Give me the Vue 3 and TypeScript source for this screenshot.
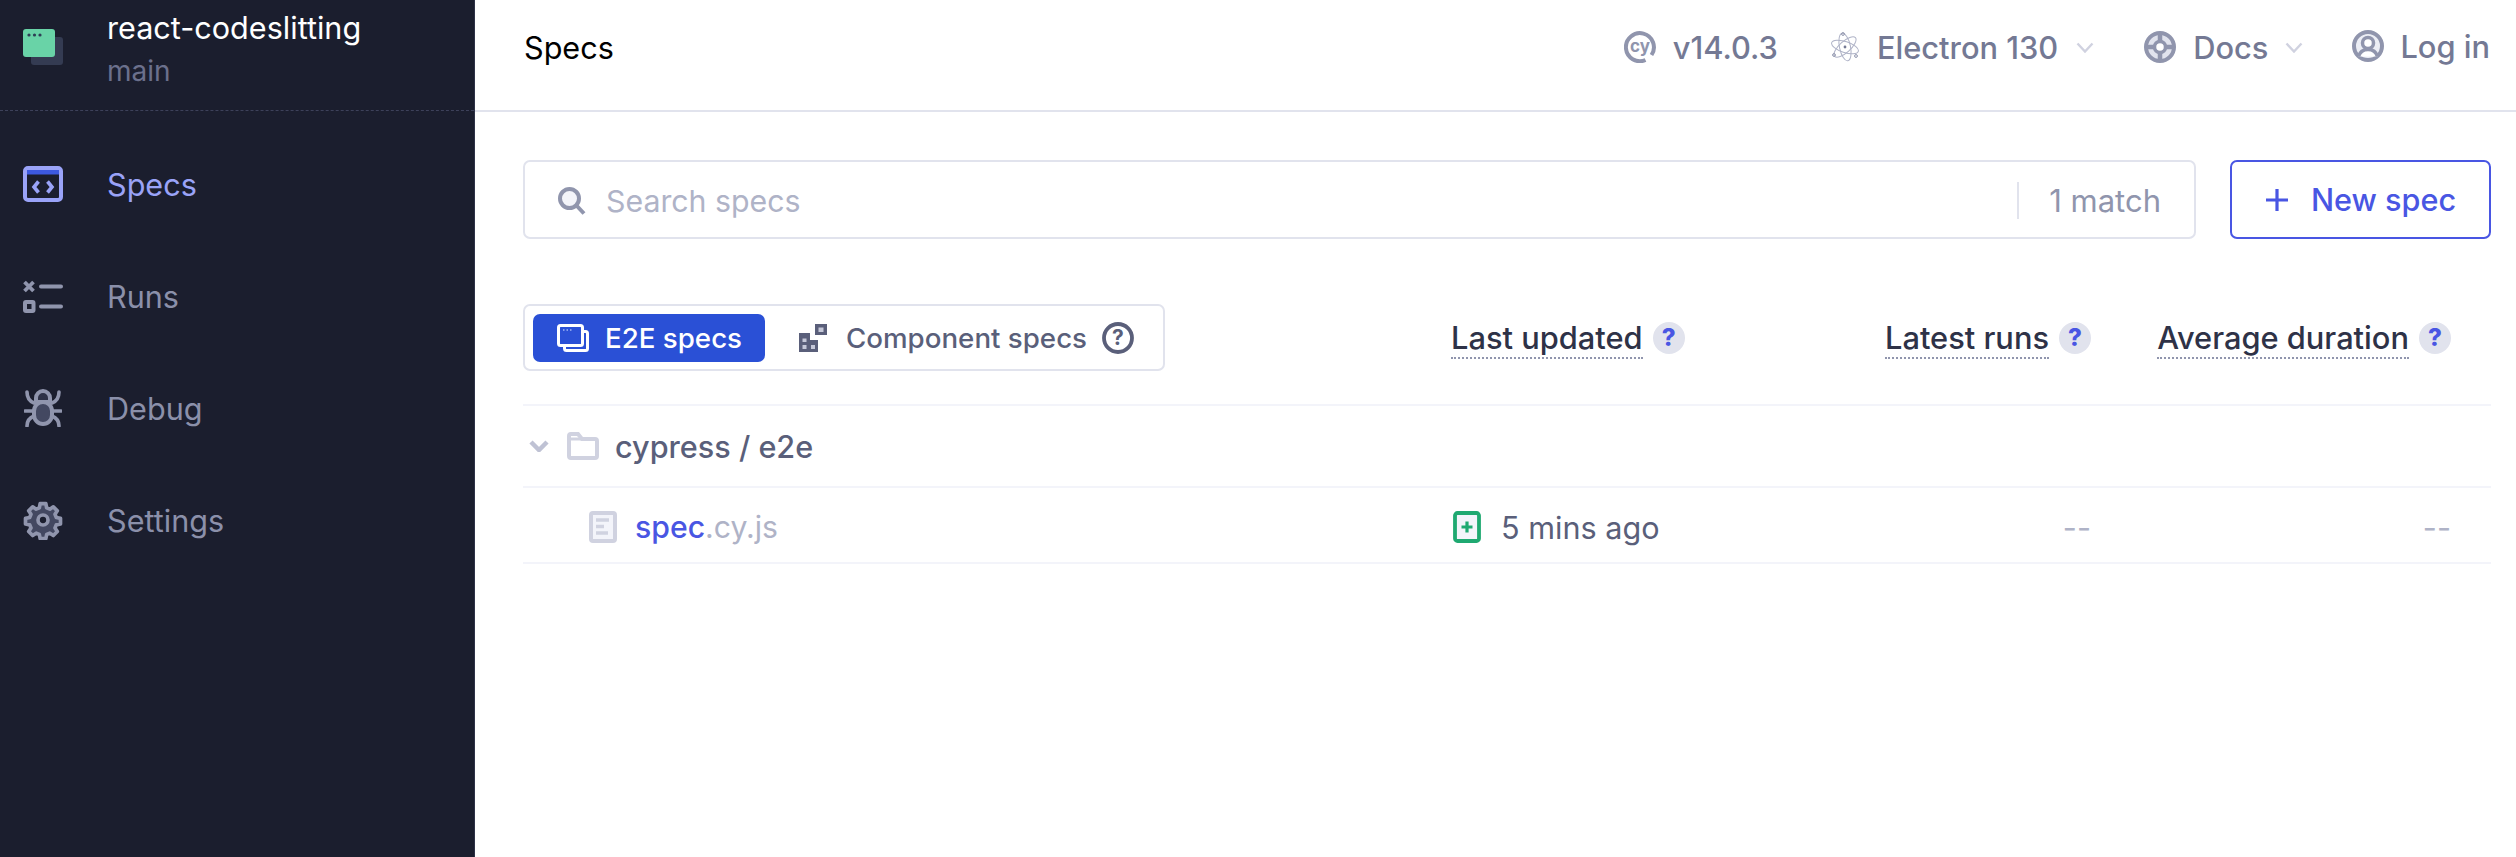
<script setup lang="ts">
const navItems = ['Specs', 'Runs', 'Debug', 'Settings']
</script>

<template>
  <div class="app">
    <aside class="sidebar">
      <div class="brand">
        <svg class="logo" width="40" height="36" viewBox="0 0 40 36">
          <rect x="8" y="8" width="32" height="28" rx="3" fill="#343b52" />
          <rect x="0" y="0" width="32" height="28" rx="3" fill="#69d3a7" />
          <circle cx="6" cy="6" r="1.6" fill="#2e3f55" />
          <circle cx="11.5" cy="6" r="1.6" fill="#2e3f55" />
          <circle cx="17" cy="6" r="1.6" fill="#2e3f55" />
        </svg>
        <div class="brand-text">
          <div class="brand-name">react-codeslitting</div>
          <div class="brand-branch">main</div>
        </div>
      </div>
      <nav class="nav">
        <div v-for="item in navItems" :key="item" class="nav-item" :class="{ active: item === 'Specs' }">
          <span class="nav-icon">
            <svg v-if="item === 'Specs'" width="40" height="36" viewBox="0 0 40 36" fill="none">
              <rect x="2" y="2" width="36" height="32" rx="3" stroke="#9aa3f8" stroke-width="4" />
              <rect x="4" y="4" width="32" height="4.500" fill="#3d59e0" />
              <path d="M15.500 15.500 11 21l4.500 5.500M24.500 15.500 29 21l-4.500 5.500" stroke="#9aa3f8" stroke-width="3.600" />
            </svg>
            <svg v-else-if="item === 'Runs'" width="40" height="33" viewBox="0 0 40 33" fill="none">
              <path d="M1.500 2 10.500 11M10.500 2 1.500 11" stroke="#9095ad" stroke-width="3.800" />
              <path d="M18 6.500h20M18 26.500h20" stroke="#9095ad" stroke-width="4" stroke-linecap="round" />
              <rect x="2" y="22" width="8.500" height="9" rx="1" stroke="#9095ad" stroke-width="4" />
            </svg>
            <svg v-else-if="item === 'Debug'" width="38" height="38" viewBox="0 0 38 38" fill="none">
              <path d="M12 13V9a7 7 0 0 1 14 0v4" stroke="#9095ad" stroke-width="4" fill="#2e3247" />
              <rect x="10" y="13" width="18" height="22" rx="9" fill="#434861" stroke="#9095ad" stroke-width="4" />
              <path d="M10 13h18" stroke="#9095ad" stroke-width="4" />
              <path d="M3 3c0 5 2 9 7 11M35 3c0 5-2 9-7 11M1 22h9M37 22h-9M3 37c0-5 2-8 7-10M35 37c0-5-2-8-7-10" stroke="#9095ad" stroke-width="3.600" stroke-linecap="round" />
            </svg>
            <svg v-else width="40" height="40" viewBox="0 0 24 24" fill="#434861" stroke="#9095ad" stroke-width="2.200" stroke-linejoin="round">
              <path d="M10.300 2.200h3.400l.5 2.500 1.900.8 2.100-1.400 2.400 2.400-1.400 2.100.8 1.900 2.500.5v3.400l-2.500.5-.8 1.900 1.400 2.100-2.400 2.400-2.100-1.400-1.900.8-.5 2.500h-3.400l-.5-2.500-1.900-.8-2.100 1.400-2.400-2.400 1.400-2.100-.8-1.900-2.500-.5v-3.400l2.500-.5.8-1.900-1.400-2.100 2.400-2.400 2.100 1.400 1.900-.8z" />
              <circle cx="12" cy="12" r="3" fill="#1b1e2e" />
            </svg>
          </span>
          <span>{{ item }}</span>
        </div>
      </nav>
    </aside>

    <div class="content">
      <header class="topbar">
        <div class="page-title">Specs</div>
        <div class="top-items">
          <div class="top-item version">
            <svg width="32" height="32" viewBox="0 0 32 32" fill="none">
              <path d="M21.500 29A14 14 0 1 1 27.500 24" stroke="#9095ad" stroke-width="4" />
              <text x="16" y="21" text-anchor="middle" class="cy-text">cy</text>
            </svg>
            <span>v14.0.3</span>
          </div>
          <div class="top-item electron">
            <svg width="28" height="32" viewBox="0 0 28 32" fill="none" stroke="#afb3c7" stroke-width="1">
              <ellipse cx="14" cy="16" rx="5.500" ry="14" transform="rotate(-12 14 16)" />
              <ellipse cx="14" cy="16" rx="5.500" ry="14" transform="rotate(48 14 16)" />
              <ellipse cx="14" cy="16" rx="5.500" ry="14" transform="rotate(-72 14 16)" />
              <circle cx="14" cy="16" r="1.400" fill="#747994" stroke="none" />
              <circle cx="12" cy="3" r="1.400" stroke="#9095ad" />
              <circle cx="3" cy="24" r="1.400" stroke="#9095ad" />
              <circle cx="25" cy="25" r="1.400" stroke="#9095ad" />
            </svg>
            <span>Electron 130</span>
            <svg class="caret" width="18" height="11" viewBox="0 0 18 11" fill="none">
              <path d="M1.500 1.500 9 9.500l7.500-8" stroke="#d0d2e0" stroke-width="2.400" />
            </svg>
          </div>
          <div class="top-item docs">
            <svg width="32" height="32" viewBox="0 0 32 32" fill="none">
              <circle cx="16" cy="16" r="14" fill="#e1e3ed" stroke="#9095ad" stroke-width="4" />
              <path d="M16 3v26M3 16h26" stroke="#9095ad" stroke-width="4.500" />
              <circle cx="16" cy="16" r="5.500" fill="#fff" stroke="#9095ad" stroke-width="3.500" />
            </svg>
            <span>Docs</span>
            <svg class="caret" width="18" height="11" viewBox="0 0 18 11" fill="none">
              <path d="M1.500 1.500 9 9.500l7.500-8" stroke="#d0d2e0" stroke-width="2.400" />
            </svg>
          </div>
          <div class="top-item login">
            <svg width="32" height="32" viewBox="0 0 32 32" fill="none">
              <circle cx="16" cy="16" r="14" fill="#eceef5" stroke="#9095ad" stroke-width="4" />
              <circle cx="16" cy="13" r="5.500" fill="#fff" stroke="#9095ad" stroke-width="3.500" />
              <path d="M6.500 26.500c1.500-5 5-7 9.500-7s8 2 9.500 7" fill="#fff" stroke="#9095ad" stroke-width="3.500" />
            </svg>
            <span>Log in</span>
          </div>
        </div>
      </header>

      <main class="main">
        <div class="search-row">
          <div class="search">
            <svg width="28" height="28" viewBox="0 0 28 28" fill="none">
              <circle cx="11.500" cy="11.500" r="9.500" fill="#f3f4fa" stroke="#9095ad" stroke-width="4" />
              <path d="M18 18l8 8.500" stroke="#9095ad" stroke-width="4" />
            </svg>
            <span class="search-placeholder">Search specs</span>
            <span class="search-divider"></span>
            <span class="search-count">1 match</span>
          </div>
          <button class="new-spec">
            <svg width="24" height="24" viewBox="0 0 24 24" fill="none">
              <path d="M12 1v22M1 12h22" stroke="#4956e3" stroke-width="3.200" />
            </svg>
            <span>New spec</span>
          </button>
        </div>

        <div class="grid head-row">
          <div class="toggle-cell">
            <div class="toggle">
              <div class="toggle-btn on">
                <svg width="32" height="28" viewBox="0 0 32 28" fill="none">
                  <rect x="7.500" y="7.500" width="23" height="19" rx="2" stroke="#fff" stroke-width="3" />
                  <rect x="1.500" y="1.500" width="24" height="20" rx="2" fill="#2a50d6" stroke="#fff" stroke-width="3" />
                  <path d="M6 6h1.500M9.500 6H11M13 6h1.500" stroke="#a3b5f5" stroke-width="1.500" />
                </svg>
                <span>E2E specs</span>
              </div>
              <div class="toggle-btn off">
                <svg width="28" height="28" viewBox="0 0 28 28">
                  <path d="M16 0h12v11H16zM0 9h11v7h8v12H0z" fill="#5a5f7a" />
                  <path d="M19.500 3.500h5v4.500h-5zM3.500 14.500h4v3.500h-4zM3.500 21h4v4h-4zM12 21h4v4h-4z" fill="#c5c8d8" />
                </svg>
                <span>Component specs</span>
              </div>
              <svg class="toggle-help" width="32" height="32" viewBox="0 0 32 32" fill="none">
                <circle cx="16" cy="16" r="14" stroke="#5a5f7a" stroke-width="3.800" />
                <text x="16" y="23" text-anchor="middle" class="help-mark">?</text>
              </svg>
            </div>
          </div>
          <div class="col-head">
            <span class="head-label">Last updated</span>
            <span class="q-badge">?</span>
          </div>
          <div class="col-head end">
            <span class="head-label">Latest runs</span>
            <span class="q-badge">?</span>
          </div>
          <div class="col-head end">
            <span class="head-label">Average duration</span>
            <span class="q-badge">?</span>
          </div>
        </div>

        <div class="folder-row">
          <svg width="20" height="12" viewBox="0 0 20 12" fill="none">
            <path d="M2 2l8 8 8-8" stroke="#bfc2d4" stroke-width="4.500" />
          </svg>
          <svg class="folder" width="32" height="28" viewBox="0 0 32 28" fill="none">
            <path d="M2 4a2 2 0 0 1 2-2h7l4 5h13a2 2 0 0 1 2 2v15a2 2 0 0 1-2 2H4a2 2 0 0 1-2-2z" stroke="#d0d2e0" stroke-width="4" />
            <path d="M2 7h13" stroke="#d0d2e0" stroke-width="3" />
          </svg>
          <span>cypress / e2e</span>
        </div>

        <div class="grid file-row">
          <div class="file-cell">
            <svg width="28" height="32" viewBox="0 0 28 32" fill="none">
              <rect x="2" y="2" width="24" height="28" rx="2" fill="#f3f4fa" stroke="#d0d2e0" stroke-width="4" />
              <path d="M7 9h13M7 15.500h8M7 22h12" stroke="#d0d2e0" stroke-width="3.500" />
            </svg>
            <span class="file-name"><b>spec</b>.cy.js</span>
          </div>
          <div class="updated">
            <svg width="28" height="32" viewBox="0 0 28 32" fill="none">
              <rect x="2" y="2" width="24" height="28" rx="2.500" fill="#f3f4fa" stroke="#1fa971" stroke-width="3.800" />
              <path d="M14 10.500v11M8.500 16h11" stroke="#1fa971" stroke-width="3.200" />
            </svg>
            <span>5 mins ago</span>
          </div>
          <div class="dash">--</div>
          <div class="dash">--</div>
        </div>
      </main>
    </div>
  </div>
</template>

<style>
html,
body {
  margin: 0;
  background: #fff;
}
</style>

<style scoped>
.app {
  display: flex;
  width: 100%;
  height: 857px;
  overflow: hidden;
  font-family: Inter, "Liberation Sans", sans-serif;
  font-size: 30.6px;
  background: #fff;
}
svg {
  display: block;
  flex: none;
}
.sidebar {
  flex: none;
  width: 474px;
  background: #1b1e2e;
  border-right: 1px solid #2e3247;
}
.brand {
  display: flex;
  align-items: flex-start;
  gap: 44px;
  height: 110px;
  padding-left: 23px;
  border-bottom: 1px dashed #3d415a;
}
.logo {
  margin-top: 29px;
}
.brand-text {
  margin-top: 6px;
}
.brand-name {
  color: #fff;
  line-height: 44px;
}
.brand-branch {
  color: #6b708c;
  font-size: 28px;
  line-height: 42px;
}
.nav {
  padding-top: 17px;
}
.nav-item {
  display: flex;
  align-items: center;
  gap: 44px;
  height: 112px;
  padding-left: 23px;
  color: #8b90aa;
}
.nav-item.active {
  color: #9aa3f8;
}
.nav-icon {
  display: flex;
  justify-content: center;
  width: 40px;
}
.content {
  flex: 1;
  min-width: 0;
}
.topbar {
  display: flex;
  align-items: center;
  justify-content: space-between;
  box-sizing: content-box;
  height: 94px;
  padding: 0 26px 16px 49px;
  border-bottom: 2px solid #e1e3ed;
}
.page-title {
  color: #000;
}
.top-items {
  display: flex;
  align-items: center;
  color: #747994;
  font-size: 30.8px;
  font-weight: 500;
}
.top-item {
  display: flex;
  align-items: center;
}
.version {
  gap: 17px;
}
.electron {
  gap: 18px;
  margin-left: 53px;
}
.docs {
  gap: 17px;
  margin-left: 50px;
}
.login {
  gap: 16px;
  margin-left: 49px;
  margin-top: -2px;
}
.cy-text {
  font: 700 17px Inter, sans-serif;
  fill: #9095ad;
}
.main {
  padding: 48px 25px 0 48px;
}
.search-row {
  display: flex;
  gap: 34px;
}
.search {
  flex: 1;
  display: flex;
  align-items: center;
  box-sizing: border-box;
  height: 79px;
  padding: 2px 33px 0 33px;
  border: 2px solid #e1e3ed;
  border-radius: 7px;
}
.search-placeholder {
  flex: 1;
  margin-left: 20px;
  color: #afb3c7;
  font-size: 30.3px;
}
.search-divider {
  width: 2px;
  height: 37px;
  background: #e1e3ed;
}
.search-count {
  margin-left: 30px;
  color: #9095ad;
  font-size: 31px;
}
.new-spec {
  display: flex;
  align-items: center;
  justify-content: center;
  gap: 22px;
  box-sizing: border-box;
  width: 261px;
  height: 79px;
  padding: 0;
  border: 2px solid #4956e3;
  border-radius: 7px;
  background: #fff;
  color: #4956e3;
  font: 500 30.6px Inter, sans-serif;
}
.grid {
  display: grid;
  grid-template-columns: 928px 340px 340px 360px;
}
.head-row {
  align-items: center;
  height: 67px;
  margin-top: 65px;
  padding-bottom: 33px;
  border-bottom: 2px solid #f3f4fa;
}
.toggle {
  display: flex;
  align-items: center;
  box-sizing: border-box;
  width: 642px;
  height: 67px;
  padding: 0 8px;
  border: 2px solid #e1e3ed;
  border-radius: 7px;
}
.toggle-btn {
  display: flex;
  align-items: center;
  height: 48px;
  font-size: 27.7px;
  font-weight: 500;
}
.toggle-btn.on {
  box-sizing: border-box;
  width: 232px;
  padding-left: 24px;
  gap: 16px;
  border-radius: 7px;
  background: #2a50d6;
  color: #fff;
}
.toggle-btn.off {
  margin-left: 34px;
  gap: 19px;
  color: #5a5f7a;
}
.toggle-help {
  margin-left: 15px;
}
.help-mark {
  font: 700 21px Inter, sans-serif;
  fill: #5a5f7a;
}
.col-head {
  display: flex;
  align-items: center;
  gap: 10px;
  color: #2e3247;
  font-size: 30.8px;
  font-weight: 500;
}
.col-head.end {
  justify-content: flex-end;
  padding-right: 40px;
}
.head-label {
  padding-top: 2px;
  line-height: 38px;
  border-bottom: 2px dotted #9095ad;
}
.q-badge {
  display: flex;
  align-items: center;
  justify-content: center;
  width: 32px;
  height: 32px;
  border-radius: 50%;
  background: #e1e3ed;
  color: #4956e3;
  font-size: 24px;
  font-weight: 800;
}
.folder-row {
  display: flex;
  align-items: center;
  height: 80px;
  padding-left: 6px;
  border-bottom: 2px solid #f3f4fa;
  color: #5a5f7a;
  font-weight: 500;
}
.folder {
  margin-left: 18px;
  margin-right: 16px;
}
.file-row {
  align-items: center;
  box-sizing: border-box;
  height: 76px;
  padding-top: 4px;
  border-bottom: 2px solid #f3f4fa;
}
.file-cell {
  display: flex;
  align-items: center;
  gap: 18px;
  padding-left: 66px;
}
.file-name {
  color: #afb3c7;
  font-size: 30.2px;
}
.file-name b {
  color: #4956e3;
  font-weight: 500;
}
.updated {
  display: flex;
  align-items: center;
  gap: 20px;
  padding-left: 2px;
  color: #5a5f7a;
}
.dash {
  padding-right: 40px;
  color: #afb3c7;
  text-align: right;
}
</style>
